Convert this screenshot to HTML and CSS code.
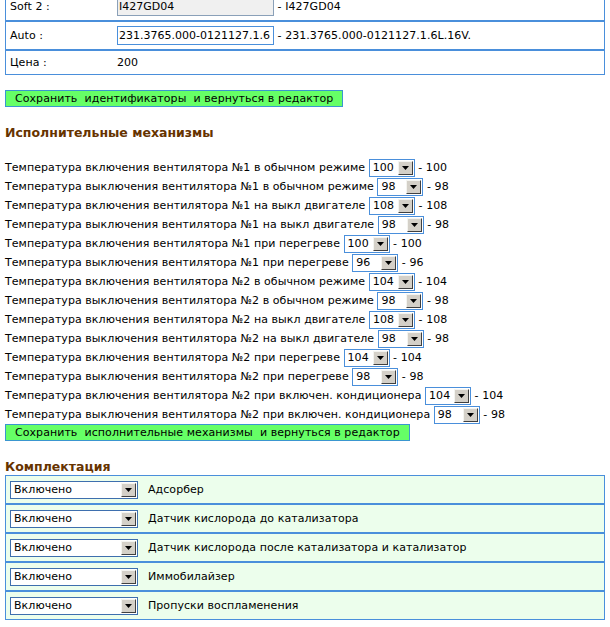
FILE: index.html
```html
<!DOCTYPE html>
<html lang="ru">
<head>
<meta charset="utf-8">
<title>Редактор</title>
<link rel="stylesheet" href="styles.css">
</head>
<body>
<div class="page">
  <div class="idtable">
    <div class="idrow">
      <span class="lbl">Soft 2 :</span>
      <span class="val"><span class="field ro">I427GD04</span> - I427GD04</span>
    </div>
    <div class="idrow">
      <span class="lbl">Auto :</span>
      <span class="val"><span class="field">231.3765.000-0121127.1.6</span> - 231.3765.000-0121127.1.6L.16V.</span>
    </div>
    <div class="idrow plain">
      <span class="lbl">Цена :</span>
      <span class="val">200</span>
    </div>
  </div>

  <button class="gbtn first">Сохранить  идентификаторы  и вернуться в редактор</button>

  <h2 class="head">Исполнительные механизмы</h2>

  <div class="fans">
    <div class="frow">Температура включения вентилятора №1 в обычном режиме <span class="sel"><span class="sv">100</span><span class="arr"><svg width="7" height="4" viewBox="0 0 7 4"><path d="M0 0H7L3.5 4Z"/></svg></span></span> - 100</div>
    <div class="frow">Температура выключения вентилятора №1 в обычном режиме <span class="sel"><span class="sv">98</span><span class="arr"><svg width="7" height="4" viewBox="0 0 7 4"><path d="M0 0H7L3.5 4Z"/></svg></span></span> - 98</div>
    <div class="frow">Температура включения вентилятора №1 на выкл двигателе <span class="sel"><span class="sv">108</span><span class="arr"><svg width="7" height="4" viewBox="0 0 7 4"><path d="M0 0H7L3.5 4Z"/></svg></span></span> - 108</div>
    <div class="frow">Температура выключения вентилятора №1 на выкл двигателе <span class="sel"><span class="sv">98</span><span class="arr"><svg width="7" height="4" viewBox="0 0 7 4"><path d="M0 0H7L3.5 4Z"/></svg></span></span> - 98</div>
    <div class="frow">Температура включения вентилятора №1 при перегреве <span class="sel"><span class="sv">100</span><span class="arr"><svg width="7" height="4" viewBox="0 0 7 4"><path d="M0 0H7L3.5 4Z"/></svg></span></span> - 100</div>
    <div class="frow">Температура выключения вентилятора №1 при перегреве <span class="sel"><span class="sv">96</span><span class="arr"><svg width="7" height="4" viewBox="0 0 7 4"><path d="M0 0H7L3.5 4Z"/></svg></span></span> - 96</div>
    <div class="frow">Температура включения вентилятора №2 в обычном режиме <span class="sel"><span class="sv">104</span><span class="arr"><svg width="7" height="4" viewBox="0 0 7 4"><path d="M0 0H7L3.5 4Z"/></svg></span></span> - 104</div>
    <div class="frow">Температура выключения вентилятора №2 в обычном режиме <span class="sel"><span class="sv">98</span><span class="arr"><svg width="7" height="4" viewBox="0 0 7 4"><path d="M0 0H7L3.5 4Z"/></svg></span></span> - 98</div>
    <div class="frow">Температура включения вентилятора №2 на выкл двигателе <span class="sel"><span class="sv">108</span><span class="arr"><svg width="7" height="4" viewBox="0 0 7 4"><path d="M0 0H7L3.5 4Z"/></svg></span></span> - 108</div>
    <div class="frow">Температура выключения вентилятора №2 на выкл двигателе <span class="sel"><span class="sv">98</span><span class="arr"><svg width="7" height="4" viewBox="0 0 7 4"><path d="M0 0H7L3.5 4Z"/></svg></span></span> - 98</div>
    <div class="frow">Температура включения вентилятора №2 при перегреве <span class="sel"><span class="sv">104</span><span class="arr"><svg width="7" height="4" viewBox="0 0 7 4"><path d="M0 0H7L3.5 4Z"/></svg></span></span> - 104</div>
    <div class="frow">Температура выключения вентилятора №2 при перегреве <span class="sel"><span class="sv">98</span><span class="arr"><svg width="7" height="4" viewBox="0 0 7 4"><path d="M0 0H7L3.5 4Z"/></svg></span></span> - 98</div>
    <div class="frow">Температура включения вентилятора №2 при включен. кондиционера <span class="sel"><span class="sv">104</span><span class="arr"><svg width="7" height="4" viewBox="0 0 7 4"><path d="M0 0H7L3.5 4Z"/></svg></span></span> - 104</div>
    <div class="frow">Температура выключения вентилятора №2 при включен. кондиционера <span class="sel"><span class="sv">98</span><span class="arr"><svg width="7" height="4" viewBox="0 0 7 4"><path d="M0 0H7L3.5 4Z"/></svg></span></span> - 98</div>
  </div>

  <button class="gbtn">Сохранить  исполнительные механизмы  и вернуться в редактор</button>

  <h2 class="head second">Комплектация</h2>

  <div class="kit">
    <div class="krow"><span class="sel wide"><span class="sv">Включено</span><span class="arr"><svg width="7" height="4" viewBox="0 0 7 4"><path d="M0 0H7L3.5 4Z"/></svg></span></span><span class="kname">Адсорбер</span></div>
    <div class="krow"><span class="sel wide"><span class="sv">Включено</span><span class="arr"><svg width="7" height="4" viewBox="0 0 7 4"><path d="M0 0H7L3.5 4Z"/></svg></span></span><span class="kname">Датчик кислорода до катализатора</span></div>
    <div class="krow"><span class="sel wide"><span class="sv">Включено</span><span class="arr"><svg width="7" height="4" viewBox="0 0 7 4"><path d="M0 0H7L3.5 4Z"/></svg></span></span><span class="kname">Датчик кислорода после катализатора и катализатор</span></div>
    <div class="krow"><span class="sel wide"><span class="sv">Включено</span><span class="arr"><svg width="7" height="4" viewBox="0 0 7 4"><path d="M0 0H7L3.5 4Z"/></svg></span></span><span class="kname">Иммобилайзер</span></div>
    <div class="krow"><span class="sel wide"><span class="sv">Включено</span><span class="arr"><svg width="7" height="4" viewBox="0 0 7 4"><path d="M0 0H7L3.5 4Z"/></svg></span></span><span class="kname">Пропуски воспламенения</span></div>
  </div>
</div>
</body>
</html>
```
FILE: styles.css
```css
html, body {
  margin: 0;
  padding: 0;
  background: #fff;
}
body {
  font-family: "DejaVu Sans", Verdana, sans-serif;
  font-size: 11px;
  letter-spacing: 0.06px;
  color: #000;
  overflow: hidden;
}
.page {
  margin-top: -8px;
  padding: 0 5px;
}
.idtable {
  width: 600px;
}
.idrow {
  display: flex;
  align-items: center;
  border: 1px solid #4a8fdb;
  height: 29px;
  box-sizing: border-box;
  padding-left: 4px;
}
.idrow.plain {
  height: 25px;
}
.lbl {
  width: 107px;
  flex: none;
}
.val {
  white-space: nowrap;
}
.field {
  display: inline-block;
  width: 157px;
  height: 19px;
  box-sizing: border-box;
  border: 1px solid #4a8fdb;
  padding: 0 1px;
  line-height: 17px;
  background: #fff;
  vertical-align: middle;
  overflow: hidden;
  letter-spacing: 0;
}
.field.ro {
  background: #f0f0f0;
  border-color: #8aa0b8;
}
.gbtn {
  display: block;
  font-family: inherit;
  font-size: 11px;
  letter-spacing: 0.06px;
  white-space: pre;
  background: #66ff66;
  border: 1px solid #3a96cf;
  height: 17px;
  line-height: 15px;
  padding: 0 9px;
  margin: 0;
  color: #000;
}
.gbtn.first {
  margin-top: 15px;
}
.head {
  font-size: 12.5px;
  font-weight: bold;
  color: #663300;
  line-height: 16px;
  letter-spacing: 0;
  margin: 18px 0 17px 0;
}
.head.second {
  margin: 18px 0 0 0;
}
.frow {
  height: 19px;
  line-height: 19px;
  white-space: nowrap;
}
.sel {
  display: inline-flex;
  align-items: center;
  box-sizing: border-box;
  width: 46px;
  height: 18px;
  border: 1px solid #4a8fdb;
  background: #fff;
  vertical-align: middle;
  line-height: 14px;
  padding: 0 1px 0 0;
}
.sv {
  flex: 1;
  padding-left: 3px;
}
.arr {
  flex: none;
  width: 15px;
  height: 14px;
  box-sizing: border-box;
  background: #d4d0c8;
  border-top: 1px solid #f4f4f0;
  border-left: 1px solid #f4f4f0;
  border-right: 1px solid #404040;
  border-bottom: 1px solid #404040;
  display: flex;
  align-items: center;
  justify-content: center;
}
.arr svg {
  display: block;
  fill: #000;
}
.kit {
  width: 600px;
}
.krow {
  display: flex;
  align-items: center;
  height: 29px;
  box-sizing: border-box;
  border: 1px solid #4a8fdb;
  background: #ecfeec;
  padding-left: 4px;
}
.sel.wide {
  width: 128px;
  border-color: #3e6fae;
}
.kname {
  margin-left: 10px;
}
```
